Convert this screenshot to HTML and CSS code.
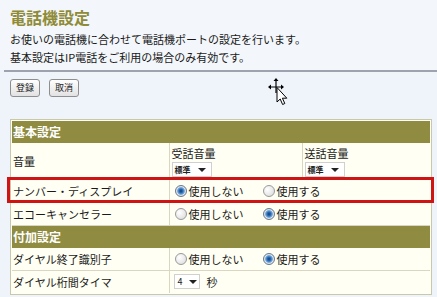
FILE: index.html
```html
<!DOCTYPE html>
<html lang="ja">
<head>
<meta charset="utf-8">
<link rel="stylesheet" href="styles.css">
</head>
<body>
<div class="head">
  <h1 class="title">電話機設定</h1>
  <p class="desc">お使いの電話機に合わせて電話機ポートの設定を行います。<br>基本設定はIP電話をご利用の場合のみ有効です。</p>
</div>
<div class="rule"></div>
<div class="actions">
  <button class="btn">登録</button>
  <button class="btn">取消</button>
</div>
<div class="panel">
  <div class="frame">
    <table class="settings">
      <tr class="group"><th colspan="2">基本設定</th></tr>
      <tr class="row vol-row">
        <td class="label">音量</td>
        <td class="value vol">
          <div class="vol-grid">
            <div class="vol-col">
              <div class="vol-label">受話音量</div>
              <span class="sel sel-std">標準<span class="arrow"></span></span>
            </div>
            <div class="vol-col vol-col2">
              <div class="vol-label">送話音量</div>
              <span class="sel sel-std">標準<span class="arrow"></span></span>
            </div>
          </div>
        </td>
      </tr>
      <tr class="row">
        <td class="label">ナンバー・ディスプレイ</td>
        <td class="value"><div class="radios"><span class="opt"><span class="radio checked"></span>使用しない</span><span class="opt"><span class="radio"></span>使用する</span></div></td>
      </tr>
      <tr class="row">
        <td class="label">エコーキャンセラー</td>
        <td class="value"><div class="radios"><span class="opt"><span class="radio"></span>使用しない</span><span class="opt"><span class="radio checked"></span>使用する</span></div></td>
      </tr>
      <tr class="group"><th colspan="2">付加設定</th></tr>
      <tr class="row">
        <td class="label">ダイヤル終了識別子</td>
        <td class="value"><div class="radios"><span class="opt"><span class="radio"></span>使用しない</span><span class="opt"><span class="radio checked"></span>使用する</span></div></td>
      </tr>
      <tr class="row">
        <td class="label">ダイヤル桁間タイマ</td>
        <td class="value"><div class="timer"><span class="sel sel-num">4<span class="arrow"></span></span><span class="unit">秒</span></div></td>
      </tr>
    </table>
  </div>
  <div class="highlight"></div>
</div>
<svg class="cursor" width="26" height="28" viewBox="0 0 26 28">
  <g fill="#000" stroke="none">
    <path d="M8 0 L10.5 3 L8.6 3 L8.6 8.4 L13 8.4 L13 6.5 L16 9 L13 11.5 L13 9.6 L8.6 9.6 L8.6 15 L7.4 15 L7.4 9.6 L3 9.6 L3 11.5 L0 9 L3 6.5 L3 8.4 L7.4 8.4 L7.4 3 L5.5 3 Z"/>
  </g>
  <path d="M9 9.5 L9 24 L12.2 21 L14.6 26.5 L16.8 25.5 L14.4 20.2 L18.8 20.2 Z" fill="#fff" stroke="#000" stroke-width="1" stroke-linejoin="miter"/>
</svg>
</body>
</html>
```
FILE: styles.css
```css
* { box-sizing: border-box; }
html, body { margin: 0; padding: 0; }
body {
  width: 437px;
  height: 297px;
  overflow: hidden;
  position: relative;
  background: #eff4fa;
  font-family: "Noto Sans CJK JP", "Noto Sans", sans-serif;
  font-size: 11px;
  color: #1a1a1a;
}
.head {
  padding: 7px 10px 0;
  background: #f3f7fb;
}
.title {
  margin: 0;
  font-size: 16px;
  line-height: 20px;
  font-weight: bold;
  color: #8f8b38;
}
.desc {
  margin: 3px 0 0;
  padding-bottom: 4px;
  font-size: 11px;
  line-height: 18px;
}
.rule {
  height: 2px;
  margin: 0 0 0 4px;
  background: #9ea2af;
}
.actions {
  display: flex;
  gap: 9px;
  padding: 7px 10px 0;
}
.btn {
  height: 18px;
  padding: 0 5px;
  font-family: "Noto Sans CJK JP", sans-serif;
  font-size: 9px;
  line-height: 16px;
  color: #222;
  border: 1px solid #8e8e8e;
  border-radius: 3px;
  background: linear-gradient(#ffffff, #e2e2e2);
}
.panel {
  position: relative;
  margin: 22px 5px 0 10px;
}
.frame {
  border: 1px solid #c9c7ac;
  background: #fffff3;
  padding: 1px;
}
.settings {
  width: 100%;
  border-collapse: collapse;
}
.group th {
  height: 22px;
  padding: 0 0 0 1px;
  text-align: left;
  background: #8f8c41;
  color: #fff;
  font-size: 12px;
  font-weight: bold;
  line-height: 22px;
}
.row td {
  height: 22px;
  padding: 0;
  border-bottom: 1px solid #d9d7c1;
  background: #fffff3;
  line-height: 22px;
}
.row:last-child td { border-bottom: none; }
.label {
  width: 157px;
  padding-left: 1px !important;
  font-size: 11px;
}
.value {
  border-left: 1px solid #d9d7c1;
}
.vol-row td { height: 36px; }
.vol-grid {
  display: grid;
  grid-template-columns: 132px 1fr;
}
.vol-col {
  display: flex;
  flex-direction: column;
  align-items: flex-start;
  padding: 2px 0 1px 2px;
}
.vol-col2 {
  border-left: 1px solid #d9d7c1;
}
.vol-label {
  line-height: 16px;
  font-size: 11px;
}
.sel {
  display: inline-flex;
  align-items: center;
  height: 15px;
  background: #fff;
  border: 1px solid #d0d0d0;
  font-size: 8px;
  line-height: 13px;
  color: #222;
}
.sel-std {
  width: 40px;
  padding-left: 2px;
  margin-top: 1px;
  font-weight: bold;
}
.sel-std .arrow { margin-left: 7px; }
.sel-num {
  width: 26px;
  padding-left: 3px;
  font-size: 9px;
}
.sel-num .arrow { margin-left: 6px; }
.arrow {
  width: 0;
  height: 0;
  border-left: 4px solid transparent;
  border-right: 4px solid transparent;
  border-top: 4.5px solid #222;
}
.radios {
  display: flex;
  padding-left: 5px;
}
.opt {
  display: inline-flex;
  align-items: center;
  gap: 2px;
  font-size: 11px;
}
.opt:first-child { width: 88px; }
.radio {
  width: 12px;
  height: 12px;
  border-radius: 50%;
  border: 1px solid #9a9a9a;
  background: radial-gradient(circle at 35% 35%, #ffffff, #d8d8d8);
  position: relative;
}
.radio.checked {
  border-color: #6b7a8a;
  background: radial-gradient(circle at 50% 50%, #0f3d7a 0, #2f6fb6 2px, #7fb0e0 3.6px, #dfe6ee 4.2px, #cfd6de 6px);
}
.timer {
  display: flex;
  align-items: center;
  gap: 7px;
  padding-left: 4px;
}
.unit { font-size: 11px; }
.highlight {
  position: absolute;
  left: -3px;
  top: 58px;
  width: 427px;
  height: 26px;
  border: 3px solid #cf1414;
  pointer-events: none;
}
.cursor {
  position: absolute;
  left: 268px;
  top: 78px;
}
```
